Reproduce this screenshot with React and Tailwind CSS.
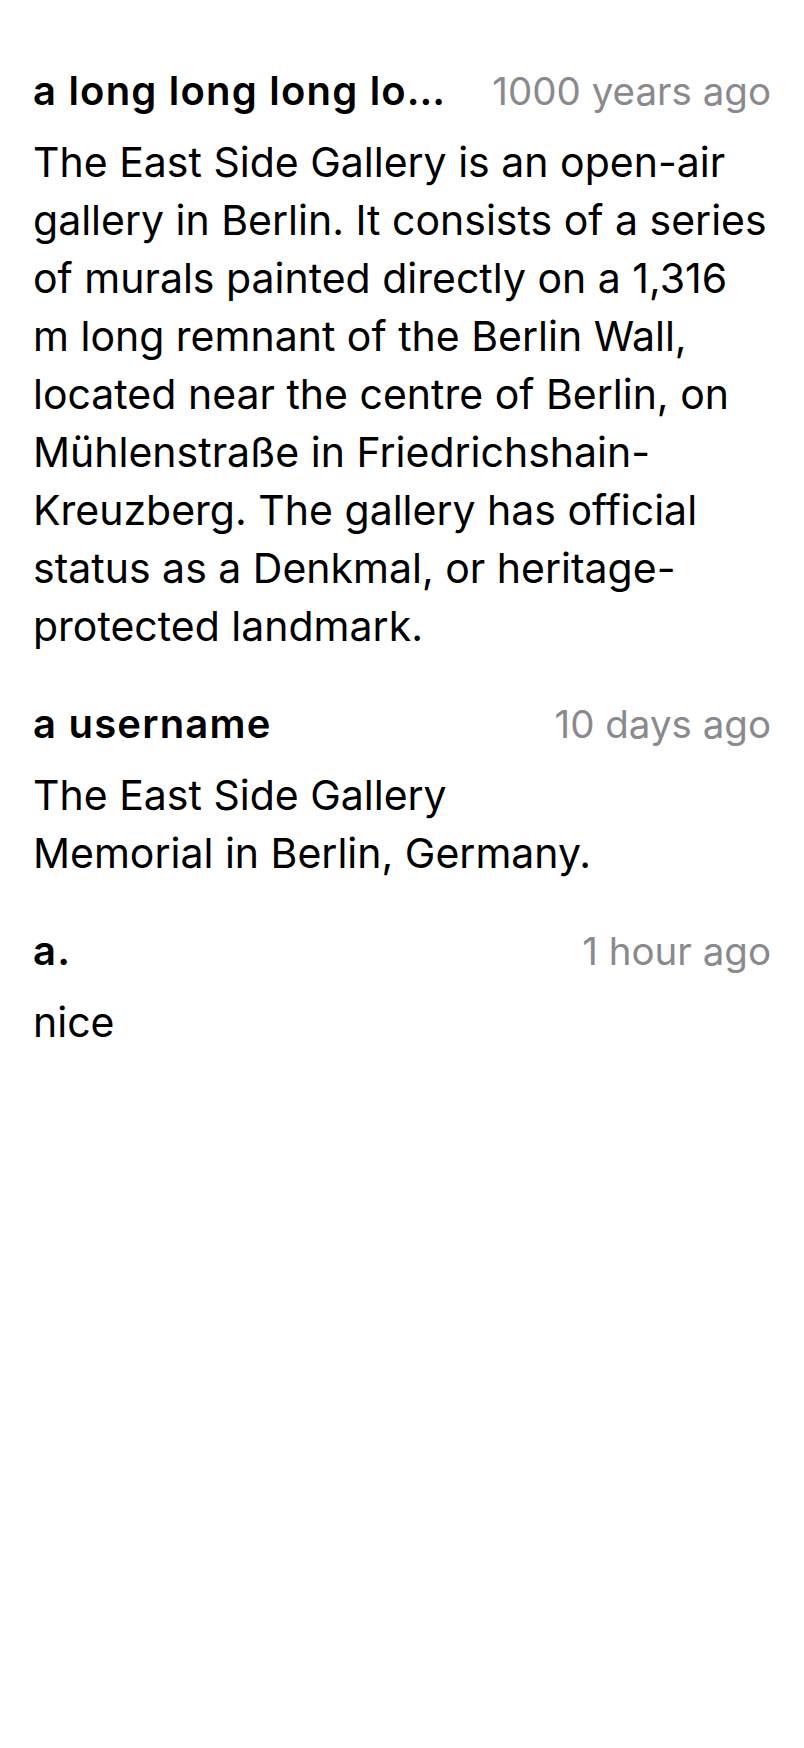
import React from "react";

const comments = [
    {
        id: 1,
        username: "a long long long long long long username",
        time: "1000 years ago",
        text: "The East Side Gallery is an open-air gallery in Berlin. It consists of a series of murals painted directly on a 1,316 m long remnant of the Berlin Wall, located near the centre of Berlin, on Mühlenstraße in Friedrichshain-Kreuzberg. The gallery has official status as a Denkmal, or heritage-protected landmark.",
    },
    {
        id: 2,
        username: "a username",
        time: "10 days ago",
        text: "The East Side Gallery\nMemorial in Berlin, Germany.",
    },
    { id: 3, username: "a.", time: "1 hour ago", text: "nice" },
];

function Comment({ comment }) {
    return (
        <div className="flex flex-col gap-4">
            <div className="flex items-center gap-7 leading-[52px]">
                <span className="min-w-0 flex-1 truncate text-[40px] font-semibold tracking-[1.2px] text-black">
                    {comment.username}
                </span>
                <span className="shrink-0 text-[38.5px] text-[#8a8a8e]">
                    {comment.time}
                </span>
            </div>
            <p className="whitespace-pre-line text-[41px] leading-[58px] text-black">
                {comment.text}
            </p>
        </div>
    );
}

export default function App() {
    return (
        <div
            className="min-h-[1748px] bg-white px-[33px] pt-[65px]"
            style={{ fontFamily: "Inter, 'Noto Sans', sans-serif" }}
        >
            <div className="flex flex-col gap-[43px]">
                {comments.map((c) => (
                    <Comment key={c.id} comment={c} />
                ))}
            </div>
        </div>
    );
}
